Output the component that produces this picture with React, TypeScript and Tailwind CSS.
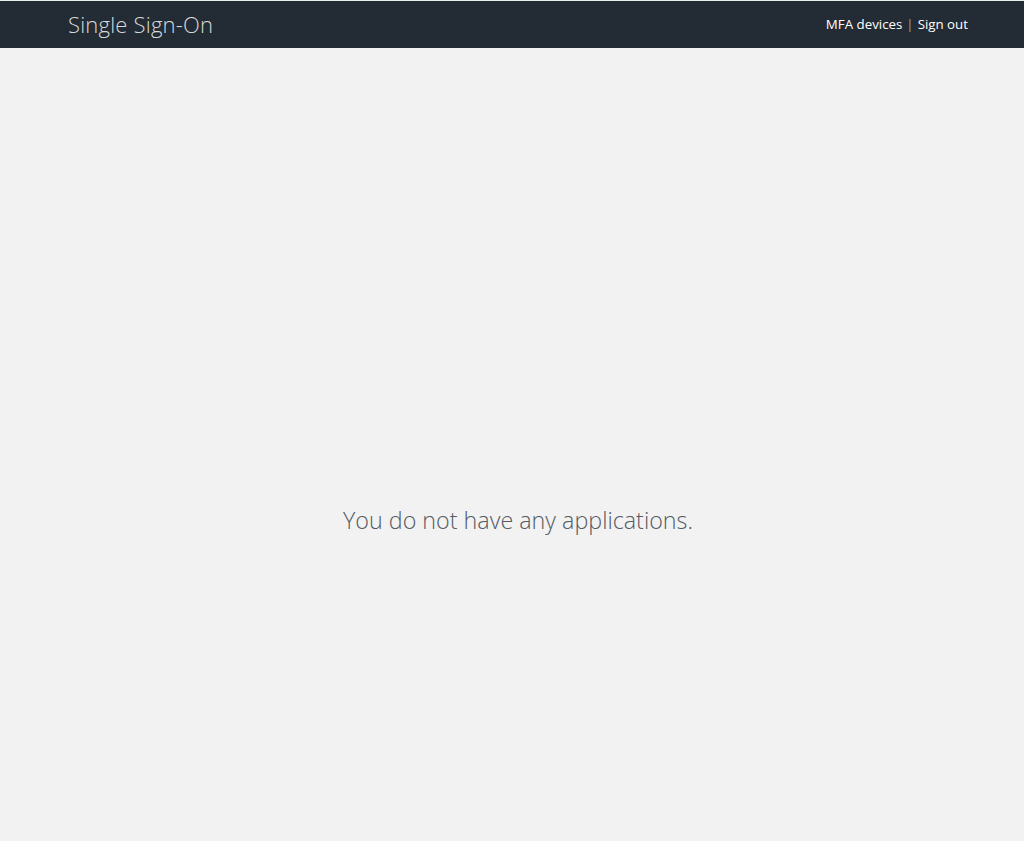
export default function App() {
  return (
    <div className="min-h-[841px] bg-[#f2f2f2] flex flex-col" style={{ fontFamily: '"Open Sans", "Liberation Sans", sans-serif' }}>
      <div className="h-px bg-[#eaeded]" />
      <header className="h-[47px] bg-[#232b35] flex items-center justify-between pl-[68px] pr-[56px]">
        <div className="text-[22px] font-light text-[#d5dbdb] tracking-[0.2px]">Single Sign-On</div>
        <div className="text-[13.3px] text-white flex items-center">
          <span>MFA devices</span>
          <span className="text-[#9aa4b0] mx-[4px]">|</span>
          <span>Sign out</span>
        </div>
      </header>
      <main className="flex-1 flex justify-center pt-[455px] pl-[12px]">
        <div className="text-[23.3px] font-light text-[#545b64]">You do not have any applications.</div>
      </main>
    </div>
  );
}
